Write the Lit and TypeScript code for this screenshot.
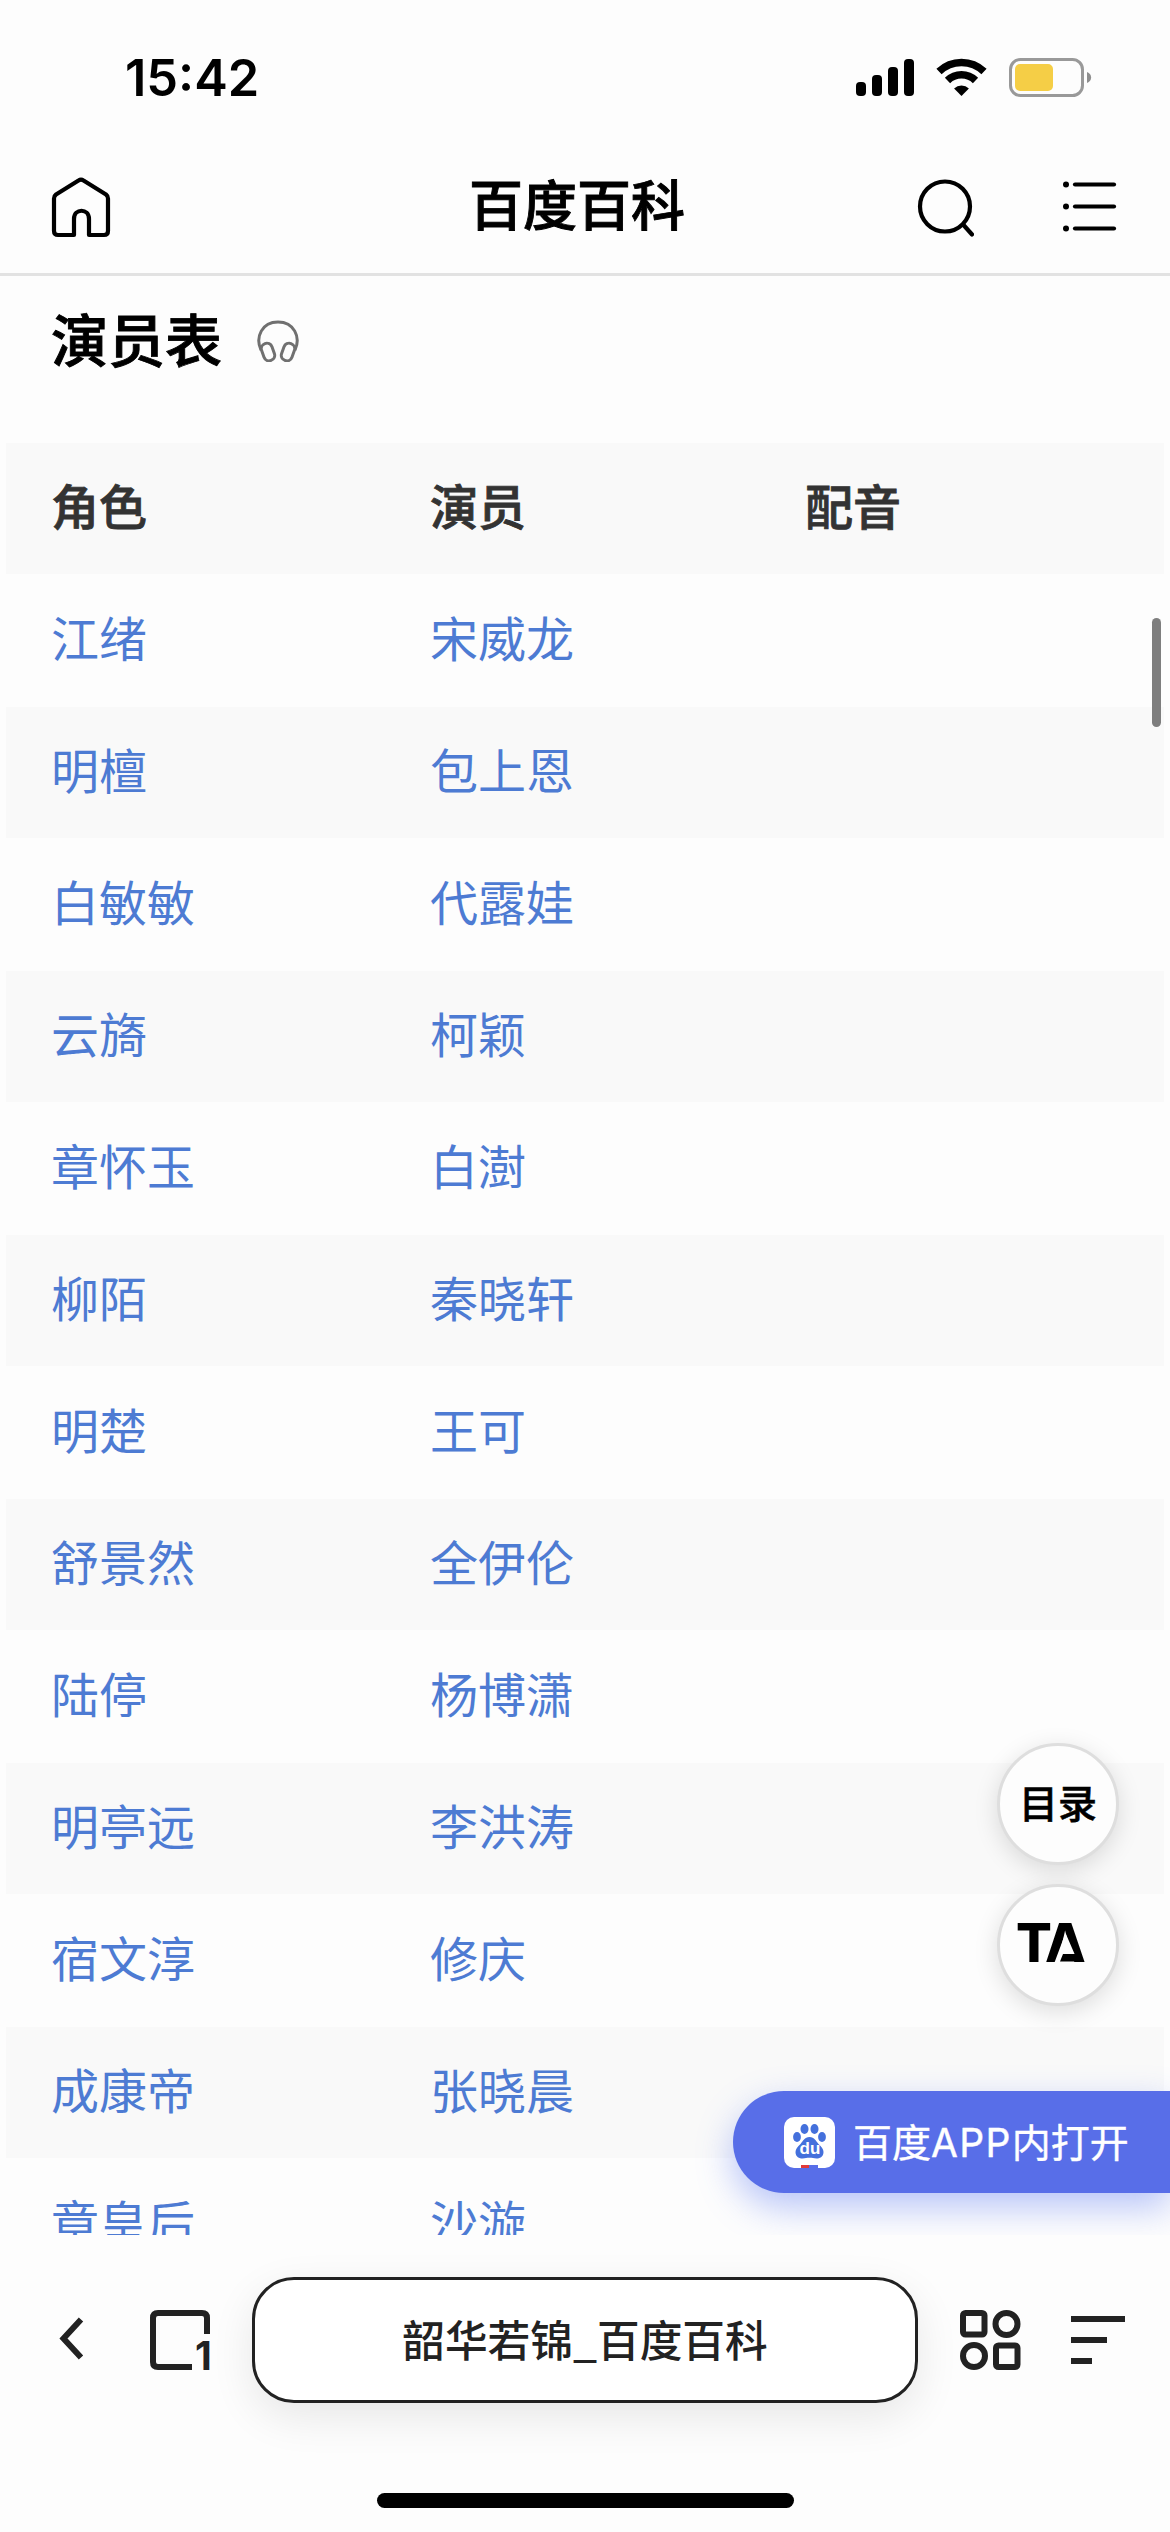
import { LitElement, html, css, svg } from "lit";
import { customElement } from "lit/decorators.js";

const ROWS: [string, string][] = [
  ["江绪", "宋威龙"],
  ["明檀", "包上恩"],
  ["白敏敏", "代露娃"],
  ["云旖", "柯颖"],
  ["章怀玉", "白澍"],
  ["柳陌", "秦晓轩"],
  ["明楚", "王可"],
  ["舒景然", "全伊伦"],
  ["陆停", "杨博潇"],
  ["明亭远", "李洪涛"],
  ["宿文淳", "修庆"],
  ["成康帝", "张晓晨"],
  ["章皇后", "沙漩"],
];

@customElement("status-bar")
export class StatusBar extends LitElement {
  static styles = css`
    :host { display: flex; align-items: center; justify-content: space-between; height: 156px; padding: 0 78px 0 125px; box-sizing: border-box; }
    .time { font: 600 50.5px/60px Inter, sans-serif; color: #000; }
    .icons { display: block; }
  `;
  render() {
    return html`
      <span class="time">15:42</span>
      <svg class="icons" width="236" height="40" viewBox="856 58 236 40">
        <rect x="856" y="82" width="10" height="14" rx="4" />
        <rect x="872" y="75" width="10" height="21" rx="4" />
        <rect x="888" y="67" width="10" height="29" rx="4" />
        <rect x="904" y="59" width="10" height="37" rx="4" />
        <g fill="none" stroke="#000" stroke-width="7.5">
          <path d="M939 71.5a32.5 32.5 0 0 1 45 0" />
          <path d="M947.5 80.5a20 20 0 0 1 28 0" />
        </g>
        <path d="M961.5 96l-7.4-7.6a10.6 10.6 0 0 1 14.8 0z" />
        <rect x="1010.5" y="59.500" width="72" height="36" rx="10" fill="none" stroke="#999" stroke-width="3" />
        <rect x="1015" y="64" width="38" height="27" rx="5" fill="#f5ce46" />
        <path d="M1087 72c5.500 2 5.500 9 0 11z" fill="#8e8e8e" />
      </svg>
    `;
  }
}

@customElement("site-header")
export class SiteHeader extends LitElement {
  static styles = css`
    :host { display: grid; grid-template-columns: 469px 216px 1fr; align-items: center; height: 120px; box-sizing: border-box; padding-bottom: 15px; border-bottom: 3px solid #e2e2e2; }
    .home { margin-left: 51px; display: block; }
    .title { font: 500 54px/80px "Noto Sans CJK SC", sans-serif; -webkit-text-stroke: 0.9px #000; color: #000; white-space: nowrap; padding-bottom: 8px; }
    .tools { justify-self: end; margin-right: 52px; display: flex; gap: 88px; }
    svg { fill: none; stroke: #000; stroke-width: 4.200; stroke-linecap: round; stroke-linejoin: round; }
    .dot { fill: #000; stroke: none; }
  `;
  render() {
    return html`
      <svg class="home" width="60" height="62" viewBox="0 0 60 62">
        <path d="M27.500 4.500q2.500-1.700 5 0L55 18.500q2 1.500 2 4V55q0 4-4 4H38V43c0-11-15-11-15 0v16H7q-4 0-4-4V22.500q0-2.500 2-4z" />
      </svg>
      <span class="title">百度百科</span>
      <div class="tools">
        <svg width="58" height="60" viewBox="0 0 58 60">
          <circle cx="29" cy="29.500" r="25" />
          <path d="M48 48.500l8 9" />
        </svg>
        <svg width="56" height="60" viewBox="0 0 56 60">
          ${[7.5, 29.5, 51.500].map((y) => svg`<circle class="dot" cx="4" cy=${y} r="3" /><path d="M13 ${y}h39" />`)}
        </svg>
      </div>
    `;
  }
}

@customElement("cast-table")
export class CastTable extends LitElement {
  static styles = css`
    :host { display: block; margin: 0 6px; font: 400 48px/122px "Noto Sans CJK SC", sans-serif; }
    .row { display: grid; grid-template-columns: 379px 375px 1fr; height: 132px; padding-left: 45px; color: #4d7bd3; }
    .row:nth-child(odd) { background: linear-gradient(#f9f9f9 131px, #fdfdfd 131px); }
    .head { font-weight: 500; -webkit-text-stroke: 0.8px #333; color: #333; }
  `;
  render() {
    return html`
      <div class="row head"><span>角色</span><span>演员</span><span>配音</span></div>
      ${ROWS.map(([role, actor]) => html`<div class="row"><span>${role}</span><span>${actor}</span></div>`)}
    `;
  }
}

@customElement("browser-bar")
export class BrowserBar extends LitElement {
  static styles = css`
    :host { display: block; height: 297px; padding-top: 42px; box-sizing: border-box; }
    .bar { display: flex; align-items: center; height: 126px; padding-left: 56px; }
    svg { display: block; flex: none; fill: none; stroke: #222; stroke-width: 6; overflow: visible; }
    .back { margin-right: 62px; }
    .num { font: 700 39px Inter, sans-serif; fill: #222; stroke: none; }
    .address { margin: 0 42px; width: 666px; height: 126px; flex: none; box-sizing: border-box; border: 3px solid #222; border-radius: 42px; background: #fff; display: flex; align-items: center; justify-content: center; padding: 0 0 5px; font: 500 42.700px/60px "Noto Sans CJK SC", sans-serif; color: #222; box-shadow: 0 14px 44px rgba(0, 0, 0, 0.09); white-space: nowrap; }
    .menu { margin-left: 50px; }
    .indicator { width: 417px; height: 15px; border-radius: 8px; background: #000; margin: 90px auto 0; }
  `;
  render() {
    return html`
      <div class="bar">
        <svg class="back" width="32" height="60" viewBox="0 0 32 60"><path d="M25 9.500L7.500 28.500 25 47.500" /></svg>
        <svg width="60" height="60" viewBox="0 0 60 60">
          <path d="M42 57H8q-5 0-5-5V8q0-5 5-5h44q5 0 5 5v16" />
          <text class="num" x="45" y="59.500">1</text>
        </svg>
        <div class="address">韶华若锦_百度百科</div>
        <svg width="61" height="60" viewBox="0 0 61 60">
          <rect x="3" y="3" width="21.500" height="21.500" rx="2.500" /><circle cx="46.500" cy="14" r="11" />
          <circle cx="14" cy="46" r="11" /><rect x="36" y="35.500" width="21.500" height="21.500" rx="2.500" />
        </svg>
        <svg class="menu" width="54" height="60" viewBox="0 0 54 60"><path d="M0 9h54M0 30h36M0 51h21" /></svg>
      </div>
      <div class="indicator"></div>
    `;
  }
}

@customElement("float-actions")
export class FloatActions extends LitElement {
  static styles = css`
    :host { display: flex; flex-direction: column; align-items: flex-end; width: 437px; }
    .round { width: 122px; height: 122px; margin-right: 51px; box-sizing: border-box; border: 3px solid #dedede; border-radius: 50%; background: #fdfdfd; box-shadow: 0 6px 24px rgba(0, 0, 0, 0.13); display: flex; align-items: center; justify-content: center; font: 500 39px/56px "Noto Sans CJK SC", sans-serif; color: #000; }
    .first { padding-bottom: 6px; -webkit-text-stroke: 0.5px #000; }
    .second { margin-top: 19px; }
    .mark { margin: -5px 14px 0 0; overflow: visible; }
    .letter { font: 800 53px Inter, sans-serif; fill: #000; }
    .open { margin-top: 85px; width: 437px; height: 102px; box-sizing: border-box; padding-left: 51px; border-radius: 51px 0 0 51px; background: #586ee8; box-shadow: 0 14px 36px rgba(78, 110, 242, 0.4); display: flex; align-items: center; gap: 18px; color: #fff; font: 400 39px/56px Inter, "Noto Sans CJK SC", sans-serif; white-space: nowrap; }
    .label { padding-top: 1px; -webkit-text-stroke: 0.4px #fff; }
    .latin { letter-spacing: 1.3px; }
    .du { font: 700 17px "Liberation Sans", sans-serif; fill: #fff; }
  `;
  render() {
    return html`
      <div class="round first">目录</div>
      <div class="round second">
        <svg class="mark" width="69" height="39" viewBox="0 0 69 39">
          <text class="letter" x="-1 28" y="38.500">TA</text>
          <path d="M48.500 10L58 32H47L44 39.500H37.500z" fill="#fdfdfd" />
          <path d="M46 31H61l5 7.500H43z" fill="#000" />
        </svg>
      </div>
      <div class="open">
        <svg width="51" height="51" viewBox="0 0 51 51">
          <rect width="51" height="51" rx="10" fill="#fff" />
          <g fill="#4470dc">
            <ellipse cx="13" cy="20" rx="3.900" ry="5" /><ellipse cx="20.500" cy="12" rx="4" ry="5" />
            <ellipse cx="30.500" cy="12" rx="4" ry="5" /><ellipse cx="38" cy="20" rx="3.900" ry="5" />
            <path d="M25.500 20c5 0 6.500 4 9 7 3 3 5 5 5 8 0 5-4 6.500-7 6.500-3 0-4-.7-7-.7s-4 .7-7 .7c-3 0-7-1.500-7-6.500 0-3 2-5 5-8 2.500-3 4-7 9-7z" />
          </g>
          <text class="du" x="15.500" y="37">du</text>
          <path d="M17 48h8v3h-8z" fill="#e03a3a" /><path d="M25 48h9v3h-9z" fill="#586ee8" />
        </svg>
        <span class="label">百度<span class="latin">APP</span>内打开</span>
      </div>
    `;
  }
}

@customElement("app-root")
export class AppRoot extends LitElement {
  static styles = css`
    :host { display: block; width: 1170px; height: 2532px; overflow: hidden; background: #fdfdfd; position: relative; }
    .content { height: 1959px; overflow: hidden; position: relative; }
    .heading { display: flex; align-items: center; height: 130px; margin-bottom: 37px; padding-left: 51px; gap: 35px; }
    .name { font: 500 57px/80px "Noto Sans CJK SC", sans-serif; -webkit-text-stroke: 0.9px #000; color: #000; padding-bottom: 9px; }
    .listen { fill: none; stroke: #707070; stroke-width: 3; }
    .floats { position: absolute; right: 0; top: 1467px; }
    .thumb { position: absolute; right: 9px; top: 342px; width: 9px; height: 109px; border-radius: 5px; background: #7e7e7e; }
  `;
  render() {
    return html`
      <status-bar></status-bar>
      <site-header></site-header>
      <main class="content">
        <div class="heading">
          <span class="name">演员表</span>
          <svg class="listen" width="42" height="42" viewBox="0 0 42 42">
            <path d="M4 30C-2 17 5 2 21 2s23 15 17 28" />
            <rect x="5.500" y="23" width="11" height="18" rx="5.500" transform="rotate(-20 11 32)" />
            <rect x="25.500" y="23" width="11" height="18" rx="5.500" transform="rotate(20 31 32)" />
          </svg>
        </div>
        <cast-table></cast-table>
        <float-actions class="floats"></float-actions>
        <div class="thumb"></div>
      </main>
      <browser-bar></browser-bar>
    `;
  }
}
